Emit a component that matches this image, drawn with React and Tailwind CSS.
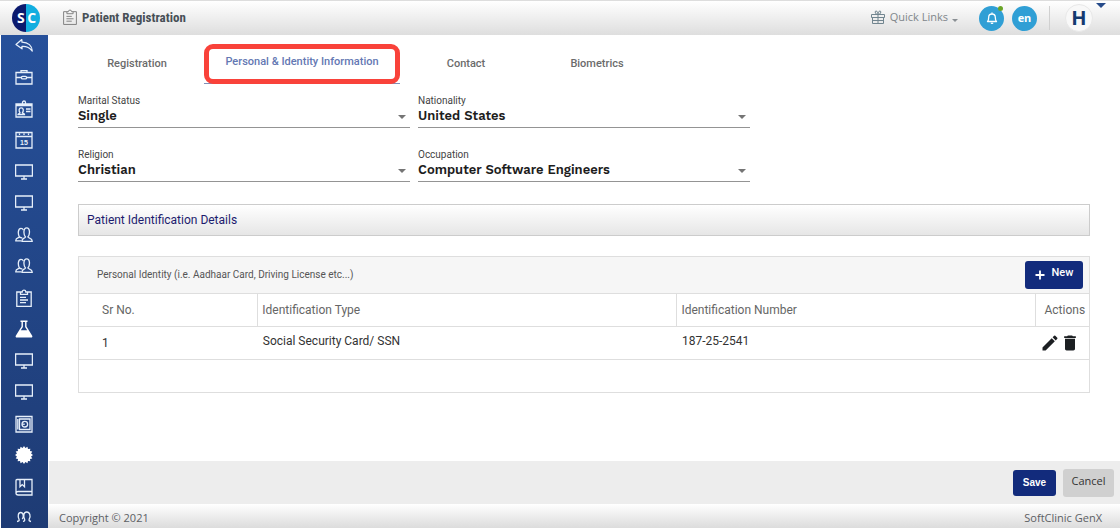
import React from "react";

function Line({ children, className = "h-[18px] w-[18px]", weight = 1.3 }) {
  return (
    <svg viewBox="0 0 18 18" className={className} fill="none" stroke="currentColor" strokeWidth={weight} aria-hidden="true">
      {children}
    </svg>
  );
}

const Back = () => (
  <Line>
    <path strokeLinejoin="round" d="M6.8 2.6 1 7.4l6 4.4V9.3c4.300-.2 7.600 1 10.300 4.700-.3-5.100-4-8.700-10.300-8.900z" />
  </Line>
);
const Briefcase = () => (
  <Line>
    <path d="M1 4.500h16v11.500H1zM6 4.500V2.600h6v1.900M1 9.500h5.500M11.500 9.500H17" />
    <rect x="6.500" y="8.300" width="5" height="2.600" rx="1" />
  </Line>
);
const IdCard = () => (
  <Line>
    <path d="M1 4h16v13H1zM1 5.500h16M7.500 5V2.500a1.500 1.500 0 0 1 3 0V5M11 9h4.500M11 11.500h4.500" />
    <path d="M3 14.500c0-1 1.800-1 2-1.800C3.600 11 3.700 7.800 6.200 7.800s2.600 3.200 1.200 4.900c.2.800 2.100.8 2.100 1.800z" />
  </Line>
);
const Calendar = () => (
  <Line>
    <path d="M1 1.500h16v15.500H1zM1 5.500h16M4.500 2.500v1.600M9 2.500v1.600M13.500 2.500v1.600" />
    <text x="9" y="13.600" textAnchor="middle" fontSize="7" fontWeight="700" fill="currentColor" stroke="none" fontFamily="Liberation Sans, sans-serif">15</text>
  </Line>
);
const Monitor = () => (
  <Line>
    <path d="M.6 2h16.800v11H.6zM9 13v3M6 16h6" />
  </Line>
);
const People = () => (
  <Line>
    <path d="M6.500 14.800H.8c-.2-3 2.200-2.500 3.700-3.700C2.800 8.300 2.700 2.300 6 2.300c1.300 0 2 .7 2.400 1.800" />
    <path d="M7 15.300c-.2-3.200 2.600-2.800 3.500-4.300C8.200 8.300 8.300 1.800 11.700 1.800s3.500 6.500 1.200 9.200c.9 1.500 4.500.9 4.300 4.300zM4.500 11.100c1 .7 1.600.5 2.800 1" />
  </Line>
);
const Clipboard = ({ className, weight }) => (
  <Line className={className} weight={weight}>
    <path d="M5.500 3H1.800v14.400h14.400V3H12.500M5.500 5.300V3H7.200a1.800 1.800 0 0 1 3.600 0h1.700v2.300zM5 8.300h6M5 11h8M5 13.700h6" />
  </Line>
);
const Flask = () => (
  <svg viewBox="0 0 18 18" className="h-[18px] w-[18px]" fill="#fff" aria-hidden="true">
    <path fillRule="evenodd" d="M5.500.5h7v1.600h-1v4.400l5.700 9.200c.5.900 0 1.800-1 1.800H1.800c-1 0-1.500-.9-1-1.800l5.700-9.200V2.100h-1zM7.900 2.100v4.800L5.800 10.300h6.400l-2.100-3.400V2.100z" />
  </svg>
);
const Safe = () => (
  <Line>
    <path d="M1 1.500h16v15.500H1zM4.500 4h10.500v10.500H4.500zM2.800 4v10.500" />
    <circle cx="9.800" cy="9.200" r="2.800" />
    <path d="M9.800 9.200H7" />
  </Line>
);
const burstPoints = Array.from({ length: 32 }, (_, i) => {
  const r = i % 2 ? 7.2 : 9;
  const a = (i * Math.PI) / 16;
  return `${(9 + r * Math.cos(a)).toFixed(2)},${(9 + r * Math.sin(a)).toFixed(2)}`;
}).join(" ");
const Burst = () => (
  <svg viewBox="0 0 18 18" className="h-[18px] w-[18px]" fill="#fff" aria-hidden="true">
    <polygon points={burstPoints} />
  </svg>
);
const Book = () => (
  <Line>
    <path d="M3 1.500h14v15.500H3.200C1.800 17 1 16.200 1 15.200V2.500c0-.6.500-1 1-1h1M1 15.200c0-1 .8-1.700 2.200-1.700H17M5 1.500v7.200L7.200 6.600l2.300 2.100V1.500" />
  </Line>
);
const Arches = () => (
  <Line>
    <path d="M2 12.500c2-.3 2.600-1 2-2.300C2.600 7.500 3 3.500 5.700 3.500S9 7.500 7.300 10.200M8 12.500c1.600-.5 2-1.200 1.600-2.300C8.200 7 8.500 3 11.700 3s4.300 4.200 2.500 7.200c-.5 1.300.2 2 1.800 2.300" />
  </Line>
);

const menu = [
  ["Back", Back], ["Cases", Briefcase], ["Patient card", IdCard], ["Appointments", Calendar],
  ["Front desk", Monitor], ["Consultation", Monitor], ["Outpatients", People], ["Inpatients", People],
  ["Records", Clipboard], ["Laboratory", Flask], ["Radiology", Monitor], ["Pharmacy", Monitor],
  ["Accounts", Safe], ["Settings", Burst], ["Library", Book], ["Staff", Arches],
];

function SelectField({ id, label, value }) {
  return (
    <div className="relative flex flex-col">
      <label htmlFor={id} className="text-[10px] leading-[14px] text-[#444]">{label}</label>
      <select
        id={id}
        defaultValue={value}
        className="h-5 w-full appearance-none border-b border-[#949494] bg-transparent pb-[3px] font-['Work_Sans','Inter',sans-serif] text-[13px] leading-4 font-semibold text-[#1d1d1d] outline-none"
      >
        <option>{value}</option>
      </select>
      <span className="pointer-events-none absolute right-1 bottom-[9px] border-x-4 border-t-4 border-x-transparent border-t-[#757575]" />
    </div>
  );
}

const tabs = [
  { name: "Registration", width: "w-[134px]" },
  { name: "Personal & Identity Information", width: "w-[196px]", active: true },
  { name: "Contact", width: "w-[132px]" },
  { name: "Biometrics", width: "w-[130px]" },
];

export default function App() {
  return (
    <div className="flex min-h-screen flex-col bg-white font-['Roboto',sans-serif] text-[#444]">
      <header className="flex h-[35px] items-center border-t border-[#ddd] bg-linear-to-b from-white to-[#dedede] pl-3">
        <svg viewBox="0 0 28 28" className="h-7 w-7" role="img" aria-label="SC">
          <path d="M14 0a14 14 0 0 0 0 28z" fill="#0b1a6e" />
          <path d="M14 0a14 14 0 0 1 0 28z" fill="#12aee0" />
          <text x="8.800" y="19" textAnchor="middle" fontSize="14" fontWeight="700" fill="#fff" fontFamily="Open Sans, sans-serif">S</text>
          <text x="19.800" y="19" textAnchor="middle" fontSize="14" fontWeight="700" fill="#fff" fontFamily="Open Sans, sans-serif">C</text>
        </svg>
        <span className="ml-[22px] pb-0.5 text-[#777]"><Clipboard className="h-4 w-4" weight={1} /></span>
        <h1 className="ml-1 font-['Roboto_Condensed','Liberation_Sans_Narrow',sans-serif] text-[13px] font-bold text-[#474f56]">Patient Registration</h1>

        <div className="ml-auto flex items-center">
          <button type="button" className="flex items-center pb-0.5 font-['Open_Sans',sans-serif] text-[11px] text-[#80868b]">
            <svg viewBox="0 0 14 14" className="mr-[5px] h-3.5 w-3.5" fill="none" stroke="#71858f" aria-hidden="true">
              <path d="M.5 4.500h13v3H.5zM1.500 7.500v6h11v-6M7 4.500v9M1.500 10.500h11M7 4.500C4 4.500 3.500 1 5 1s2 2 2 3.500C7 3 7.500 1 9 1s1 3.500-2 3.500" />
            </svg>
            Quick Links
            <span className="mt-1.5 ml-1 border-x-[3px] border-t-[3px] border-x-transparent border-t-[#8a8f94]" />
          </button>
          <button type="button" aria-label="Notifications" className="relative ml-[21px] flex h-[25px] w-[25px] items-center justify-center rounded-full bg-[#309fd5] text-white">
            <svg viewBox="0 0 14 14" className="h-3.5 w-3.5" fill="none" stroke="currentColor" strokeWidth="1.300" aria-hidden="true">
              <path strokeLinejoin="round" d="M2.500 10.500c1-1 1.200-2 1.200-4.300C3.700 4.200 5 3 7 3s3.300 1.200 3.300 3.200c0 2.300.2 3.300 1.200 4.300zM7 3V1.500" />
              <path d="M5.800 12.300h2.400" />
            </svg>
            <span className="absolute top-0 right-px h-[5px] w-[5px] rounded-full bg-[#6aa528]" />
          </button>
          <button type="button" className="ml-2 h-[25px] w-[25px] rounded-full bg-[#309fd5] font-['Open_Sans',sans-serif] text-[11px] font-bold text-white">en</button>
          <span className="ml-3 h-6 w-px bg-[#d0d0d0]" />
          <button type="button" className="relative mr-[27px] ml-[15px] h-7 w-7 rounded-full border border-[#e8e8e8] bg-[#f8f8f8] font-['Open_Sans',sans-serif] text-xl leading-[26px] font-bold text-[#153a70]">
            H
            <span className="absolute -top-[2px] -right-[14px] border-x-[5px] border-t-[5px] border-x-transparent border-t-[#264b8a]" />
          </button>
        </div>
      </header>

      <div className="flex flex-1">
        <nav aria-label="Main" className="ml-px w-[47px] shrink-0 bg-linear-to-b from-[#26509a] to-[#1e3b74] pt-0.5 pr-0.5 text-[#e6effa]">
          <ul className="flex flex-col">
            {menu.map(([name, Icon], i) => (
              <li key={name} className="h-[31px] even:h-8 even:last:h-[16px]">
                <a href={"#" + i} aria-label={name} className="flex justify-center"><Icon /></a>
              </li>
            ))}
          </ul>
        </nav>

        <div className="flex min-w-0 flex-1 flex-col">
          <main className="flex-1 pr-[30px] pl-[30px]">
            <div role="tablist" className="-ml-2 flex pt-[9px]">
              {tabs.map((t) => (
                <button
                  key={t.name}
                  type="button"
                  role="tab"
                  aria-selected={!!t.active}
                  className={`relative h-10 text-[11px] font-medium whitespace-nowrap ${t.width} ${t.active ? "border-b border-[#7f8fb8] pb-0.5 text-[#6478b3]" : "text-[#6b6b6b]"}`}
                >
                  {t.name}
                  {t.active && <span className="absolute inset-x-0 top-0 -bottom-px rounded-[9px] border-[5px] border-[#f9423a]" />}
                </button>
              ))}
            </div>

            <form className="mt-[10px] grid max-w-[672px] grid-cols-2 gap-x-2 gap-y-5">
              <SelectField id="marital" label="Marital Status" value="Single" />
              <SelectField id="nationality" label="Nationality" value="United States" />
              <SelectField id="religion" label="Religion" value="Christian" />
              <SelectField id="occupation" label="Occupation" value="Computer Software Engineers" />
            </form>

            <h2 className="mt-[22px] flex h-8 items-center border border-[#ccc] bg-linear-to-b from-white to-[#e6e6e6] px-2 text-xs text-[#1c1c6e]">
              Patient Identification Details
            </h2>

            <section className="mt-5 border border-[#dedede]">
              <div className="flex h-9 items-center justify-between bg-[#f6f6f6] pr-1.5 pl-[18px]">
                <p className="pb-0.5 text-[10px] text-[#555]">Personal Identity (i.e. Aadhaar Card, Driving License etc...)</p>
                <button type="button" className="flex h-7 w-[58px] items-center justify-center gap-[7px] rounded-[3px] bg-[#122b7c] text-[11px] font-medium text-white">
                  <svg viewBox="0 0 10 10" className="h-2.5 w-2.5" stroke="currentColor" strokeWidth="1.800" aria-hidden="true"><path d="M5 .5v9M.5 5h9" /></svg>
                  <span className="pb-[3px]">New</span>
                </button>
              </div>
              <table className="w-full table-fixed border-collapse text-left text-xs">
                <colgroup>
                  <col className="w-[17.700%]" />
                  <col className="w-[41.500%]" />
                  <col />
                  <col className="w-[54px]" />
                </colgroup>
                <thead>
                  <tr className="h-[33px] border-y border-[#dedede] text-[#666]">
                    <th className="pl-[23px] font-normal">Sr No.</th>
                    <th className="border-l border-[#dedede] pl-1 font-normal">Identification Type</th>
                    <th className="border-l border-[#dedede] pl-1 font-normal">Identification Number</th>
                    <th className="border-l border-[#dedede] pl-[9px] font-normal">Actions</th>
                  </tr>
                </thead>
                <tbody>
                  <tr className="h-[33px] border-b border-[#dedede] text-[#333]">
                    <td className="pl-[23px]">1</td>
                    <td className="pb-1 pl-[5px]">Social Security Card/ SSN</td>
                    <td className="pb-1 pl-[5px]">187-25-2541</td>
                    <td>
                      <div className="flex pl-[5px] text-[#1c1f22]">
                        <button type="button" aria-label="Edit">
                          <svg viewBox="0 0 24 24" className="h-5 w-5" fill="currentColor" aria-hidden="true"><path d="M3 17.250V21h3.750L17.810 9.940l-3.750-3.750L3 17.250zM20.710 7.040a1 1 0 0 0 0-1.410l-2.340-2.340a1 1 0 0 0-1.410 0l-1.830 1.830 3.750 3.750 1.830-1.830z" /></svg>
                        </button>
                        <button type="button" aria-label="Delete">
                          <svg viewBox="0 0 24 24" className="h-5 w-5" fill="currentColor" aria-hidden="true"><path d="M6 19c0 1.100.9 2 2 2h8c1.100 0 2-.9 2-2V7H6v12zM19 4h-3.500l-1-1h-5l-1 1H5v2h14V4z" /></svg>
                        </button>
                      </div>
                    </td>
                  </tr>
                  <tr className="h-8"><td colSpan={4} /></tr>
                </tbody>
              </table>
            </section>
          </main>

          <div className="ml-px flex h-[43px] items-center justify-end gap-[7px] bg-[#ededed] pr-1.5 font-['Open_Sans',sans-serif]">
            <button type="button" className="h-[26px] w-[43px] rounded-[3px] bg-[#122b7c] font-['Liberation_Sans',sans-serif] text-[10px] font-bold text-white">Save</button>
            <button type="button" className="h-7 w-[51px] rounded-[3px] bg-[#d0d0d0] pb-0.5 text-[11px] text-[#333]">Cancel</button>
          </div>
          <footer className="flex h-6 items-center justify-between bg-linear-to-b from-white to-[#dcdcdc] pt-1 pr-[18px] pl-[11px] font-['Open_Sans',sans-serif] text-[11px] text-[#5c6064]">
            <span>Copyright © 2021</span>
            <span>SoftClinic GenX</span>
          </footer>
        </div>
      </div>
    </div>
  );
}
